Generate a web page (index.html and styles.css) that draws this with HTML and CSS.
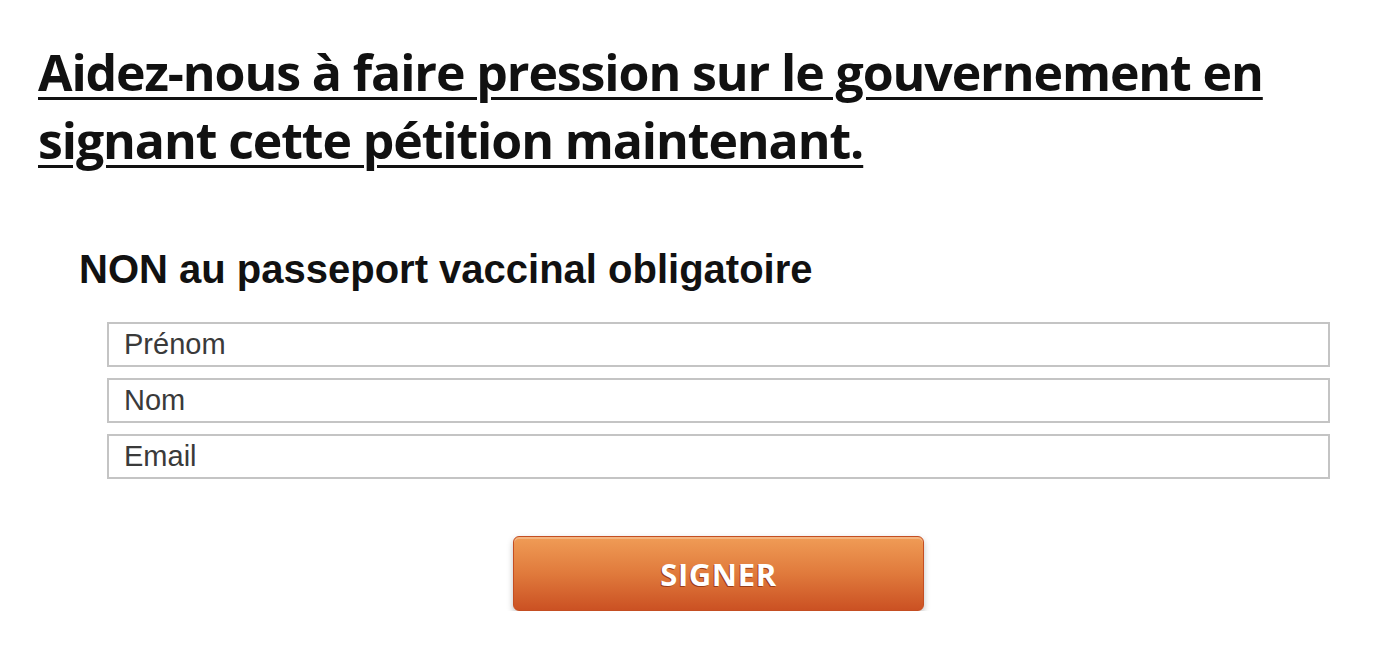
FILE: index.html
```html
<!DOCTYPE html>
<html lang="fr">
<head>
  <meta charset="UTF-8" />
  <meta name="viewport" content="width=device-width, initial-scale=1.0"/>
  <title>Pétition</title>
  <link rel="stylesheet" href="styles.css">
</head>
<body>
  <div class="page">
    <h1 class="lead"><a href="#">Aidez-nous à faire pression sur le gouvernement en signant cette pétition maintenant.</a></h1>

    <div class="petition">
      <h2>NON au passeport vaccinal obligatoire</h2>
      <form id="petition-form">
        <input type="text" placeholder="Prénom">
        <input type="text" placeholder="Nom">
        <input type="email" placeholder="Email">
        <div class="actions">
          <button type="submit">SIGNER</button>
        </div>
      </form>
    </div>
  </div>
</body>
</html>
```

FILE: styles.css
```css
body {
  margin: 0;
  padding: 0;
  background: #fff;
  font-family: "Liberation Sans", Arial, sans-serif;
}
.page {
  padding: 38px 38px 0 38px;
}
.lead {
  margin: 0;
  font-family: "Open Sans", sans-serif;
  font-weight: 700;
  font-size: 50px;
  line-height: 68px;
  letter-spacing: -1.1px;
  width: 1280px;
}
.lead a {
  color: #111;
  text-decoration: underline;
  text-decoration-thickness: 3px;
  text-underline-offset: 6px;
}
.petition {
  padding: 73px 22px 0 41px;
}
.petition h2 {
  margin: 0 0 30px 0;
  font-size: 40px;
  font-weight: 700;
  color: #111;
}
form {
  display: flex;
  flex-direction: column;
  gap: 11px;
  padding-left: 28px;
}
input[type="text"],
input[type="email"] {
  box-sizing: border-box;
  height: 45px;
  width: 100%;
  border: 2px solid #c4c4c4;
  padding: 0 15px;
  font-family: "Liberation Sans", Arial, sans-serif;
  font-size: 29px;
  color: #333;
}
input::placeholder {
  color: #3a3a3a;
}
.actions {
  display: flex;
  justify-content: center;
  padding-top: 46px;
}
button {
  width: 411px;
  height: 75px;
  border: 1px solid #c44e22;
  border-radius: 6px;
  background: linear-gradient(#f09c56, #e07a3c 50%, #cb5123);
  box-shadow: inset 0 2px 0 rgba(255,255,255,0.25), 0 3px 6px rgba(0,0,0,0.25);
  color: #fff;
  font-family: "Open Sans", sans-serif;
  font-weight: 700;
  font-size: 31px;
  letter-spacing: 0.6px;
  text-shadow: -1px 1px 0 #9a3e1a;
  cursor: pointer;
}
```
